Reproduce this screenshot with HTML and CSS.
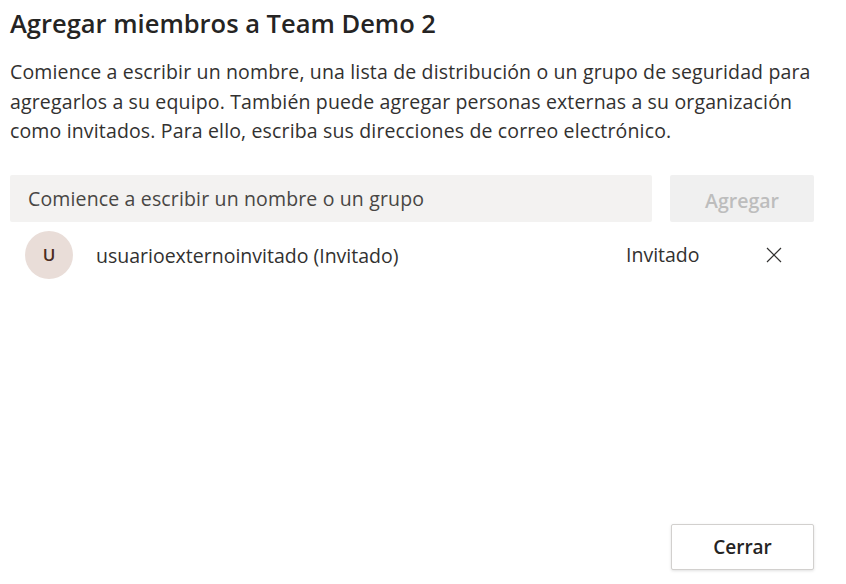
FILE: index.html
```html
<!DOCTYPE html>
<html lang="es">
<head>
<meta charset="utf-8">
<title>Agregar miembros</title>
<link rel="stylesheet" href="styles.css">
</head>
<body>
<div class="dialog">
  <h1 class="title">Agregar miembros a Team Demo 2</h1>
  <p class="desc">Comience a escribir un nombre, una lista de distribución o un grupo de seguridad para agregarlos a su equipo. También puede agregar personas externas a su organización como invitados. Para ello, escriba sus direcciones de correo electrónico.</p>
  <div class="picker">
    <div class="input">Comience a escribir un nombre o un grupo</div>
    <button class="add" disabled>Agregar</button>
  </div>
  <div class="member">
    <div class="avatar">U</div>
    <div class="name">usuarioexternoinvitado (Invitado)</div>
    <div class="role">Invitado</div>
    <button class="remove" aria-label="Quitar">
      <svg width="16" height="16" viewBox="0 0 16 16"><path d="M1 1 L15 15 M15 1 L1 15" stroke="#323130" stroke-width="1.2" fill="none"/></svg>
    </button>
  </div>
  <div class="spacer"></div>
  <div class="footer">
    <button class="close">Cerrar</button>
  </div>
</div>
</body>
</html>
```
FILE: styles.css
```css
html, body {
  margin: 0;
  padding: 0;
  background: #ffffff;
}
body {
  font-family: "Open Sans", "Noto Sans", sans-serif;
  color: #323130;
}
.dialog {
  width: 846px;
  height: 584px;
  box-sizing: border-box;
  padding: 5px 32px 14px 10px;
  display: flex;
  flex-direction: column;
}
.title {
  margin: 0;
  font-size: 25.5px;
  font-weight: 600;
  line-height: 36px;
  color: #252423;
}
.desc {
  margin: 16px -12px 0 0;
  font-size: 19.5px;
  line-height: 29.5px;
  color: #323130;
  letter-spacing: 0.15px;
}
.picker {
  display: flex;
  gap: 18px;
  margin-top: 29px;
  height: 47px;
}
.input {
  flex: 1;
  background: #f3f2f1;
  border-radius: 2px;
  display: flex;
  align-items: center;
  padding-left: 18px;
  font-size: 19.5px;
  color: #484644;
  letter-spacing: 0.15px;
}
.add {
  width: 144px;
  border: none;
  border-radius: 2px;
  background: #f0f0f0;
  color: #bdbdbd;
  font-family: inherit;
  font-size: 19.5px;
  font-weight: 600;
  padding: 4px 0 0;
}
.member {
  display: flex;
  align-items: center;
  margin-top: 8px;
  padding-left: 15px;
  height: 50px;
}
.avatar {
  width: 48px;
  height: 48px;
  border-radius: 50%;
  background: #e9ddd8;
  color: #4a2c22;
  display: flex;
  align-items: center;
  justify-content: center;
  font-size: 17px;
  font-weight: 600;
}
.name {
  margin-left: 23px;
  flex: 1;
  font-size: 19.5px;
  padding-top: 2px;
}
.role {
  font-size: 19.5px;
  width: 140px;
}
.remove {
  border: none;
  background: none;
  padding: 0;
  width: 16px;
  height: 16px;
  margin-right: 32px;
  display: flex;
}
.spacer {
  flex: 1;
}
.footer {
  display: flex;
  justify-content: flex-end;
}
.close {
  width: 143px;
  height: 46px;
  background: #ffffff;
  border: 1px solid #d2d0ce;
  border-radius: 2px;
  box-shadow: 0 1px 3px rgba(0,0,0,0.12);
  font-family: inherit;
  font-size: 19px;
  font-weight: 600;
  color: #252423;
}
```
